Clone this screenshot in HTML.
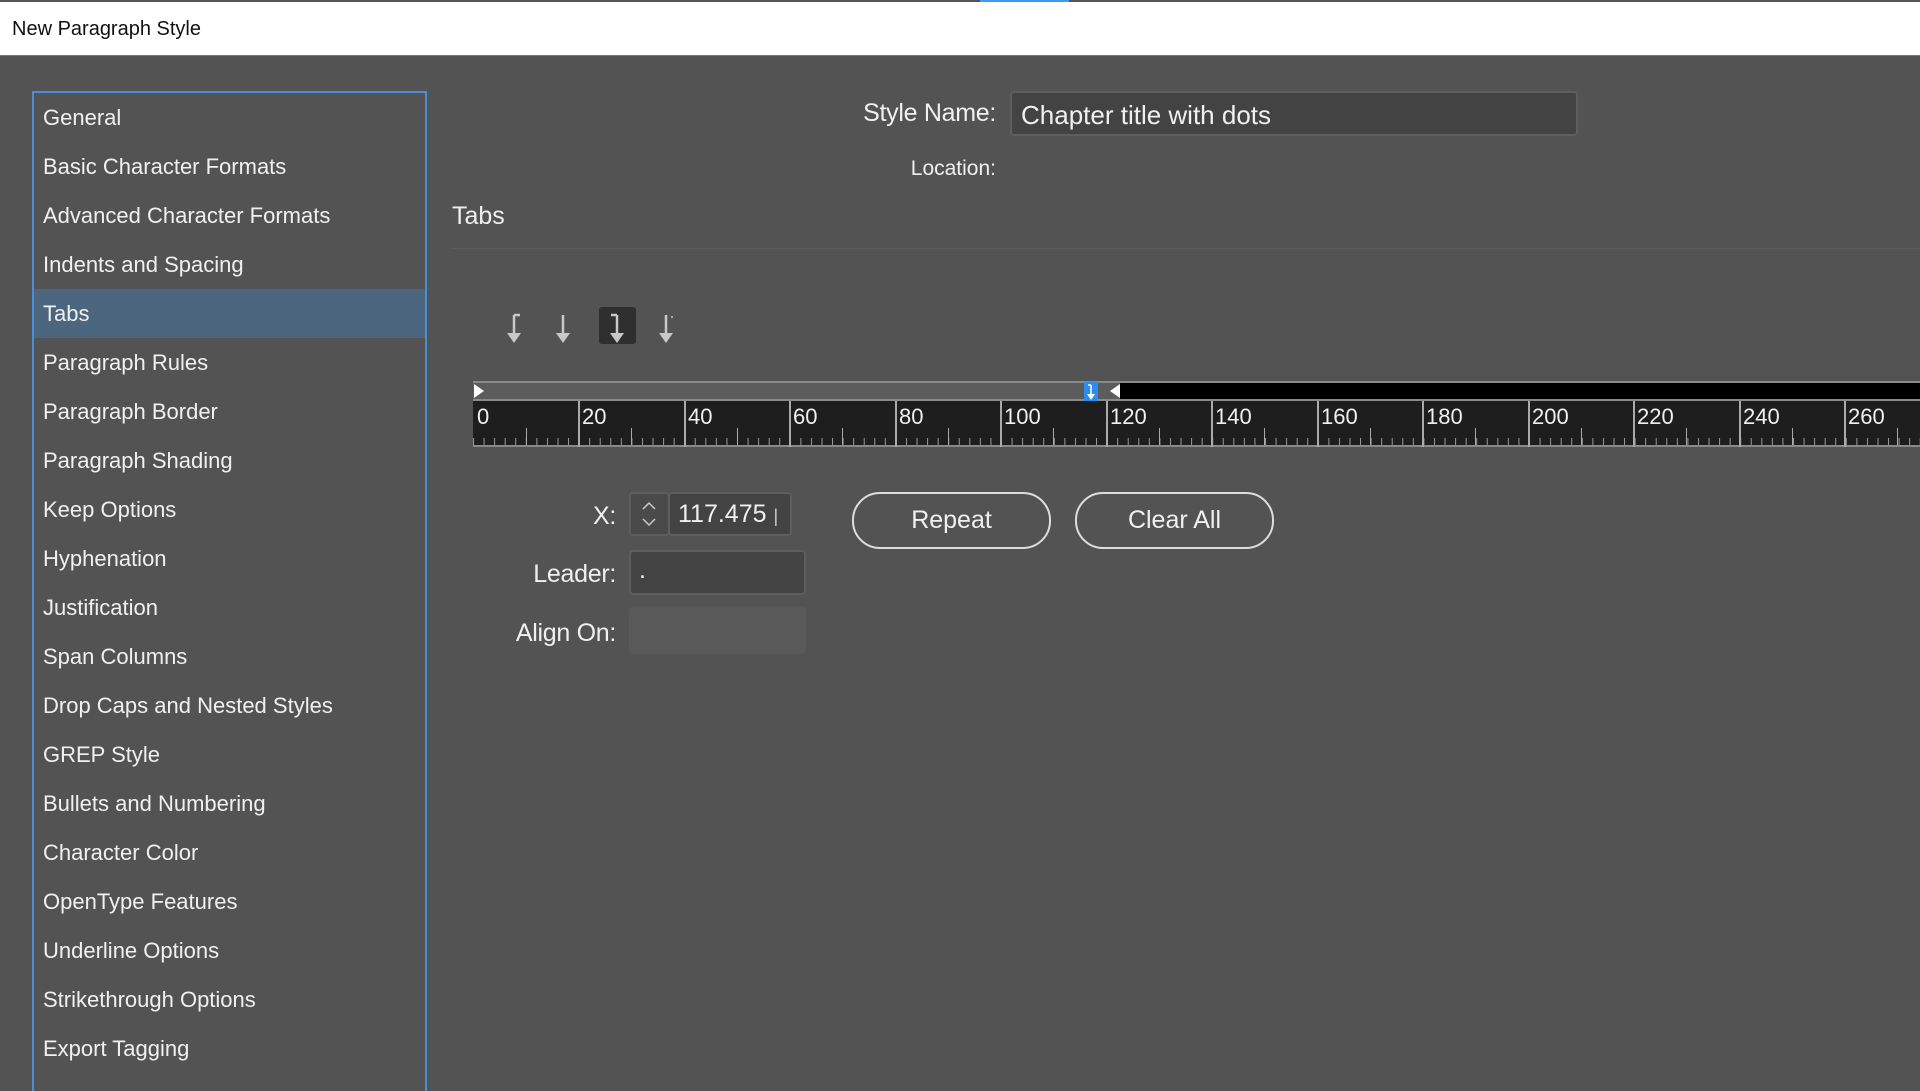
<!DOCTYPE html>
<html><head><meta charset="utf-8"><style>
*{margin:0;padding:0;box-sizing:border-box}
body{width:1920px;height:1080px;background:#535353;font-family:"Liberation Sans",sans-serif;color:#f0f0f0;position:relative;overflow:hidden}
.abs{position:absolute}
#title{left:0;top:0;width:1920px;height:56px;background:#fff;border-top:2px solid #555;border-bottom:1px solid #777}
#title span{position:absolute;left:12px;top:16px;font-size:20px;color:#111}
#list{left:32px;top:91px;width:395px;height:1000px;border:2px solid #4a8fd6;border-bottom:none}
.it{position:absolute;left:0;width:391px;height:49px;font-size:22px;padding-left:9px;line-height:49px;color:#f0f0f0}
.sel{background:#4c6680}
.lbl{font-size:25px;text-align:right;letter-spacing:-0.3px}
.box{background:#434343;border:2px solid #5e5e5e;border-radius:4px}
.btn{border:2px solid #ddd;border-radius:28px;font-size:25px;text-align:center;line-height:52px}
</style></head><body>
<div id="title" class="abs"><span>New Paragraph Style</span></div>
<div class="abs" style="left:980px;top:0;width:89px;height:2px;background:#3a9bf0"></div>
<div id="list" class="abs">
<div class="it" style="top:0">General</div>
<div class="it" style="top:49px">Basic Character Formats</div>
<div class="it" style="top:98px">Advanced Character Formats</div>
<div class="it" style="top:147px">Indents and Spacing</div>
<div class="it sel" style="top:196px">Tabs</div>
<div class="it" style="top:245px">Paragraph Rules</div>
<div class="it" style="top:294px">Paragraph Border</div>
<div class="it" style="top:343px">Paragraph Shading</div>
<div class="it" style="top:392px">Keep Options</div>
<div class="it" style="top:441px">Hyphenation</div>
<div class="it" style="top:490px">Justification</div>
<div class="it" style="top:539px">Span Columns</div>
<div class="it" style="top:588px">Drop Caps and Nested Styles</div>
<div class="it" style="top:637px">GREP Style</div>
<div class="it" style="top:686px">Bullets and Numbering</div>
<div class="it" style="top:735px">Character Color</div>
<div class="it" style="top:784px">OpenType Features</div>
<div class="it" style="top:833px">Underline Options</div>
<div class="it" style="top:882px">Strikethrough Options</div>
<div class="it" style="top:931px">Export Tagging</div>
</div>

<div class="abs lbl" style="left:700px;width:296px;top:99px">Style Name:</div>
<div class="abs box" style="left:1010px;top:91px;width:568px;height:45px;font-size:26px;padding:7px 9px">Chapter title with dots</div>
<div class="abs" style="left:800px;width:196px;top:157px;font-size:21px;text-align:right">Location:</div>
<div class="abs" style="left:452px;top:202px;font-size:25px">Tabs</div>
<div class="abs" style="left:452px;top:248px;width:1468px;height:1px;background:#5c5c5c"></div>

<div class="abs" style="left:599px;top:307px;width:37px;height:37px;background:#2f2f2f;border-radius:3px"></div>
<svg class="abs" style="left:490px;top:305px" width="200" height="45" viewBox="0 0 200 45">
<g fill="#c8c8c8" stroke="#c8c8c8" stroke-width="2.5">
<path d="M24 10V30M24 10H30" fill="none"/><path d="M17 28H31L24 38Z" stroke="none"/>
<path d="M73 10V30" fill="none"/><path d="M66 28H80L73 38Z" stroke="none"/>
<path d="M127 10V30M127 10H121" fill="none"/><path d="M120 28H134L127 38Z" stroke="none"/>
<path d="M176 10V30" fill="none"/><path d="M169 28H183L176 38Z" stroke="none"/><circle cx="182" cy="12" r="1" stroke="none"/>
</g></svg>

<svg class="abs" style="left:0;top:378px" width="1920" height="72">
<defs><pattern id="mn" x="473" y="0" width="10.56" height="72" patternUnits="userSpaceOnUse"><rect x="0" y="60" width="1" height="7" fill="#999"/></pattern></defs>
<rect x="473" y="3" width="1447" height="20" fill="#5c5c5c"/>
<rect x="473" y="3" width="1447" height="2" fill="#8a8a8a"/>
<rect x="473" y="21" width="1447" height="2" fill="#8a8a8a"/>
<rect x="1120" y="5" width="800" height="16" fill="#000"/>
<path d="M474 6L484 13L474 20Z" fill="#fff"/>
<path d="M1120 6L1110 13L1120 20Z" fill="#fff"/>
<rect x="1084" y="4" width="14" height="20" fill="#2d8cf0"/>
<path d="M1091 7V18M1088 7H1091" stroke="#fff" stroke-width="1.5" fill="none"/><path d="M1087 16H1095L1091 22Z" fill="#fff"/>
<rect x="473" y="23" width="1447" height="46" fill="#1e1e1e"/>
<rect x="473" y="23" width="1447" height="46" fill="url(#mn)"/>
<rect x="473" y="67" width="1447" height="2" fill="#8a8a8a"/>
<g fill="#aaa">
<rect x="578" y="23" width="2" height="46"/><rect x="684" y="23" width="2" height="46"/><rect x="789" y="23" width="2" height="46"/><rect x="895" y="23" width="2" height="46"/><rect x="1000" y="23" width="2" height="46"/><rect x="1106" y="23" width="2" height="46"/><rect x="1211" y="23" width="2" height="46"/><rect x="1317" y="23" width="2" height="46"/><rect x="1422" y="23" width="2" height="46"/><rect x="1528" y="23" width="2" height="46"/><rect x="1633" y="23" width="2" height="46"/><rect x="1739" y="23" width="2" height="46"/><rect x="1844" y="23" width="2" height="46"/>
<rect x="526" y="50" width="1" height="17"/><rect x="631" y="50" width="1" height="17"/><rect x="737" y="50" width="1" height="17"/><rect x="842" y="50" width="1" height="17"/><rect x="948" y="50" width="1" height="17"/><rect x="1053" y="50" width="1" height="17"/><rect x="1159" y="50" width="1" height="17"/><rect x="1264" y="50" width="1" height="17"/><rect x="1370" y="50" width="1" height="17"/><rect x="1475" y="50" width="1" height="17"/><rect x="1581" y="50" width="1" height="17"/><rect x="1686" y="50" width="1" height="17"/><rect x="1792" y="50" width="1" height="17"/><rect x="1897" y="50" width="1" height="17"/>
</g>
<g fill="#f0f0f0" font-family="Liberation Sans, sans-serif" font-size="22">
<text x="477" y="46">0</text><text x="582" y="46">20</text><text x="688" y="46">40</text><text x="793" y="46">60</text><text x="899" y="46">80</text><text x="1004" y="46">100</text><text x="1110" y="46">120</text><text x="1215" y="46">140</text><text x="1321" y="46">160</text><text x="1426" y="46">180</text><text x="1532" y="46">200</text><text x="1637" y="46">220</text><text x="1743" y="46">240</text><text x="1848" y="46">260</text>
</g></svg>

<div class="abs lbl" style="left:500px;width:116px;top:502px">X:</div>
<div class="abs box" style="left:629px;top:492px;width:41px;height:44px;background:#4a4a4a"></div>
<svg class="abs" style="left:629px;top:492px" width="41" height="44"><path d="M14 17L20 11L26 17M14 27L20 33L26 27" stroke="#ccc" stroke-width="1.5" fill="none"/></svg>
<div class="abs box" style="left:668px;top:492px;width:124px;height:44px;font-size:25px;padding:6px 8px">117.475 <span style="font-size:18px;color:#ccc">|</span></div>
<div class="abs lbl" style="left:480px;width:136px;top:560px">Leader:</div>
<div class="abs box" style="left:629px;top:550px;width:177px;height:45px;font-size:25px;padding:4px 8px">.</div>
<div class="abs lbl" style="left:470px;width:146px;top:619px">Align On:</div>
<div class="abs" style="left:629px;top:607px;width:177px;height:47px;background:#595959;border-radius:4px"></div>
<div class="abs btn" style="left:852px;top:492px;width:199px;height:57px">Repeat</div>
<div class="abs btn" style="left:1075px;top:492px;width:199px;height:57px">Clear All</div>
</body></html>
